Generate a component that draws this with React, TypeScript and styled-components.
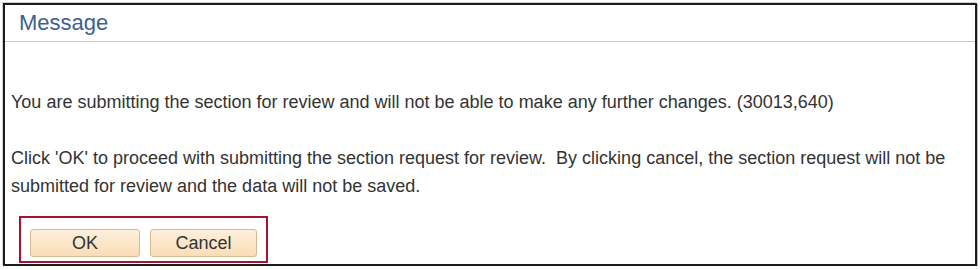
import React from "react";
import styled, { createGlobalStyle } from "styled-components";

const Global = createGlobalStyle`
  html, body { margin: 0; padding: 0; background: #ffffff; }
  body { font-family: "Liberation Sans", Arial, sans-serif; }
`;

const Frame = styled.div`
  box-sizing: border-box;
  margin: 3px 0 0 3px;
  width: 974px;
  height: 263px;
  border: 2px solid #1c1c1c;
  box-shadow: 1px 1px 0 #b5b5b5, -1px -1px 0 #d0d0d0;
  background: #fff;
  display: flex;
  flex-direction: column;
`;

const Header = styled.div`
  height: 36px;
  border-bottom: 1px solid #c8c8c8;
  display: flex;
  align-items: center;
  padding-left: 14px;
`;

const Title = styled.h1`
  margin: 0;
  font-size: 22px;
  font-weight: normal;
  color: #3f5f8c;
`;

const Body = styled.div`
  padding: 46px 6px 0 6px;
  font-size: 18px;
  line-height: 28px;
  color: #333333;
`;

const Para = styled.p<{ $gapAfter?: boolean }>`
  margin: 0 0 ${(p) => (p.$gapAfter ? "28px" : "0")} 0;
`;

const ButtonGroup = styled.div`
  box-sizing: border-box;
  margin: 16px 0 0 8px;
  width: 249px;
  height: 47px;
  border: 2px solid #a8112f;
  display: flex;
  align-items: flex-start;
  gap: 10px;
  padding: 11px 0 0 9px;
`;

const Button = styled.button<{ $w: number }>`
  box-sizing: border-box;
  width: ${(p) => p.$w}px;
  height: 28px;
  border: 1px solid #d8bb92;
  border-radius: 3px;
  background: linear-gradient(to bottom, #fdf0dc 0%, #f9ddb6 100%);
  font-family: "Liberation Sans", Arial, sans-serif;
  font-size: 18px;
  color: #333333;
  padding: 0;
  cursor: pointer;
`;

export default function App() {
  return (
    <>
      <Global />
      <Frame>
        <Header>
          <Title>Message</Title>
        </Header>
        <Body>
          <Para $gapAfter>
            You are submitting the section for review and will not be able to make any further changes. (30013,640)
          </Para>
          <Para>
            Click 'OK' to proceed with submitting the section request for review.&nbsp; By clicking cancel, the section request will not be submitted for review and the data will not be saved.
          </Para>
          <ButtonGroup>
            <Button $w={110}>OK</Button>
            <Button $w={107}>Cancel</Button>
          </ButtonGroup>
        </Body>
      </Frame>
    </>
  );
}
